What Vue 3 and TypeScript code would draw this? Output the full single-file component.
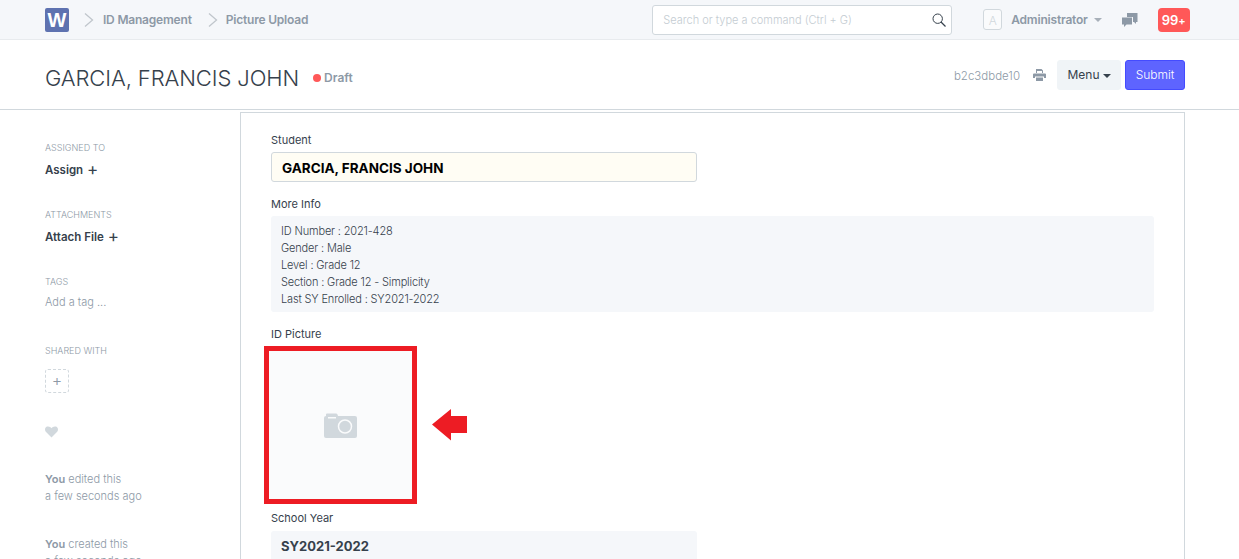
<script setup lang="ts">
const info: string[] = [
  'ID Number : 2021-428',
  'Gender : Male',
  'Level : Grade 12',
  'Section : Grade 12 - Simplicity',
  'Last SY Enrolled : SY2021-2022',
]
</script>

<template>
  <div class="page">
    <header class="nav">
      <div class="logo">W</div>
      <svg class="chev first" width="10" height="14" viewBox="0 0 10 14"><path d="M1 .5 8.500 7 1 13.500" fill="none" stroke="#c0c6cc" stroke-width="1.300" /></svg>
      <span class="crumb">ID Management</span>
      <svg class="chev second" width="10" height="14" viewBox="0 0 10 14"><path d="M1 .5 8.500 7 1 13.500" fill="none" stroke="#c0c6cc" stroke-width="1.300" /></svg>
      <span class="crumb">Picture Upload</span>
      <div class="search">
        <span class="placeholder">Search or type a command (Ctrl + G)</span>
        <svg width="14" height="14" viewBox="0 0 14 14"><circle cx="5.700" cy="5.700" r="4.700" fill="none" stroke="#36414c" stroke-width="1" /><path d="M9 9l4.500 4.500" stroke="#36414c" stroke-width="1.300" /></svg>
      </div>
      <div class="avatar">A</div>
      <span class="user">Administrator</span>
      <span class="caret nav-caret"></span>
      <svg class="chat" width="16" height="14" viewBox="0 0 16 14">
        <path d="M5 0h10.500v9H14v2l-2-2h-1V4H5z" fill="#8d99a6" />
        <path d="M0 4.500h10v7H4.500L2 14v-2.500H0z" fill="#8d99a6" />
      </svg>
      <div class="badge">99<small>+</small></div>
    </header>

    <section class="titlebar">
      <h1>GARCIA, FRANCIS JOHN</h1>
      <span class="dot"></span>
      <span class="status">Draft</span>
      <span class="docid">b2c3dbde10</span>
      <svg class="printer" width="13" height="12" viewBox="0 0 13 12">
        <path d="M3 0h5.500L10 1.500V4H9V2H4v2H3z M1 4.500h11q1 0 1 1V9h-2V7.500H2V9H0V5.500q0-1 1-1z M3 8.500h7V12H3z" fill="#8d99a6" />
      </svg>
      <button class="btn menu">Menu<span class="caret menu-caret"></span></button>
      <button class="btn submit">Submit</button>
    </section>

    <main class="body">
      <aside class="side">
        <div class="side-label first-label">ASSIGNED TO</div>
        <div class="side-action">Assign <span class="plus">+</span></div>
        <div class="side-label attach-label">ATTACHMENTS</div>
        <div class="side-action">Attach File <span class="plus">+</span></div>
        <div class="side-label tags-label">TAGS</div>
        <div class="add-tag">Add a tag ...</div>
        <div class="side-label shared-label">SHARED WITH</div>
        <div class="share-box">+</div>
        <svg class="heart" width="13" height="12" viewBox="0 0 13 12"><path d="M6.500 11.500.8 5.800C-.6 4.200-.1 1.200 2 .6c1.800-.5 3.500.2 4.500 1.700C7.500.8 9.200.1 11 .6c2.100.6 2.600 3.600 1.200 5.200z" fill="#d1d8dd" /></svg>
        <div class="activity"><b>You</b> edited this<br />a few seconds ago</div>
        <div class="activity created"><b>You</b> created this<br />a few seconds ago</div>
      </aside>

      <section class="card">
        <div class="field-label student-label">Student</div>
        <div class="student">GARCIA, FRANCIS JOHN</div>
        <div class="field-label more-label">More Info</div>
        <div class="more">
          <div v-for="line in info" :key="line">{{ line }}</div>
        </div>
        <div class="field-label picture-label">ID Picture</div>
        <div class="picture-row">
          <div class="picture">
            <svg width="33" height="25" viewBox="0 0 33 25">
              <path d="M2 3V1.500Q2 .5 3 .500h9q1 0 1.500 1L14 3h17q2 0 2 2v18q0 2-2 2H2q-2 0-2-2V5q0-2 2-2z" fill="#d1d8dd" />
              <rect x="4" y="4" width="8" height="1.500" fill="#fafbfc" />
              <circle cx="21" cy="13.500" r="6.500" fill="none" stroke="#fafbfc" stroke-width="1.500" />
            </svg>
          </div>
          <svg class="arrow" width="36" height="32" viewBox="0 0 36 32"><path d="M0 15.500 19 0v7h16v17H19v7.500z" fill="#ed1c24" /></svg>
        </div>
        <div class="field-label year-label">School Year</div>
        <div class="year">SY2021-2022</div>
      </section>
    </main>
  </div>
</template>

<style>
html, body { margin: 0; overflow: hidden; background: #fff; }
</style>

<style scoped>
.page { width: 1239px; height: 559px; overflow: hidden; font-family: Inter, "Noto Sans", sans-serif; color: #36414c; background: #fff; }
.nav { height: 39px; background: #f5f7fa; border-bottom: 1px solid #e8ebee; display: flex; align-items: center; padding-left: 45px; box-sizing: content-box; }
.logo { width: 24px; height: 24px; border-radius: 2px; background: #5e72b0; color: #fff; font: 700 20px/24px "Liberation Sans", sans-serif; text-align: center; flex: none; }
.chev { flex: none; }
.chev.first { margin: 0 9px 0 15px; }
.chev.second { margin: 0 8px 0 16px; }
.crumb { font-size: 12px; font-weight: 600; color: #8d99a6; white-space: nowrap; letter-spacing: -0.2px; }
.search { margin-left: 344px; width: 300px; height: 30px; border: 1px solid #d1d8dd; border-radius: 3px; background: #fff; display: flex; align-items: center; justify-content: space-between; padding: 0 5px 0 10px; box-sizing: border-box; flex: none; }
.placeholder { font-size: 11px; font-weight: 300; color: #c4ccd2; white-space: nowrap; }
.avatar { margin-left: 31px; width: 19px; height: 21px; border: 1px solid #d1d8dd; border-radius: 3px; background: #fafbfc; color: #d1d8dd; font-size: 12px; font-weight: 300; line-height: 21px; text-align: center; flex: none; box-sizing: border-box; }
.user { margin-left: 9px; font-size: 12px; font-weight: 600; color: #8d99a6; white-space: nowrap; letter-spacing: -0.2px; }
.caret { display: inline-block; width: 0; height: 0; border-left: 4px solid transparent; border-right: 4px solid transparent; border-top: 4px solid currentColor; }
.nav-caret { color: #a8b0b9; margin-left: 6px; }
.chat { margin-left: 20px; flex: none; }
.badge { margin-left: 20px; width: 32px; height: 24px; background: #ff5858; border-radius: 4px; color: #fff; font-size: 13px; font-weight: 600; line-height: 24px; text-align: center; flex: none; }
.badge small { font-size: 11px; }

.titlebar { height: 69px; border-bottom: 1px solid #d1d8dd; display: flex; align-items: center; padding-left: 45px; }
h1 { margin: 6px 0 0; font-size: 22px; font-weight: 300; line-height: 30px; letter-spacing: -0.1px; color: #36414c; white-space: nowrap; }
.dot { width: 8px; height: 8px; border-radius: 50%; background: #ff5858; margin: 6px 3px 0 14px; flex: none; }
.status { margin-top: 6px; font-size: 12px; font-weight: 600; color: #8d99a6; }
.docid { margin: 2px 0 0 auto; font-size: 11.500px; font-weight: 300; color: #8d99a6; }
.printer { margin: 0 0 0 13px; flex: none; }
.btn { font-family: inherit; font-size: 12px; height: 30px; border-radius: 3px; padding: 0; box-sizing: border-box; cursor: pointer; }
.menu { margin-left: 11px; width: 64px; background: #f0f4f7; border: 1px solid #f0f4f7; color: #36414c; }
.menu-caret { margin-left: 3px; vertical-align: 1px; }
.submit { margin: 0 54px 0 4px; width: 60px; background: #5e64ff; border: 1px solid #444bff; color: #fff; font-weight: 300; }

.body { display: flex; padding-left: 45px; }
.side { width: 195px; flex: none; }
.side-label { font-size: 9px; font-weight: 300; line-height: 12px; color: #8d99a6; white-space: nowrap; }
.first-label { margin-top: 32px; }
.attach-label { margin-top: 31px; }
.tags-label { margin-top: 31px; }
.shared-label { margin-top: 35px; }
.side-action { margin-top: 8px; font-size: 11.500px; font-weight: 600; line-height: 16px; color: #36414c; white-space: nowrap; }
.plus { font-size: 17px; font-weight: 400; margin-left: 1px; line-height: 14px; vertical-align: -1px; }
.add-tag { margin-top: 6px; font-size: 11px; font-weight: 300; line-height: 16px; color: #8d99a6; }
.share-box { margin-top: 12px; width: 24px; height: 24px; border: 1px dashed #d1d8dd; border-radius: 3px; box-sizing: border-box; color: #8d99a6; font-size: 16px; font-weight: 300; line-height: 21px; text-align: center; }
.heart { display: block; margin-top: 33px; }
.activity { margin-top: 33px; font-size: 11px; font-weight: 300; line-height: 17px; color: #8d99a6; white-space: nowrap; }
.activity b { font-weight: 600; }
.activity.created { margin-top: 31px; }

.card { width: 945px; flex: none; margin-top: 2px; border: 1px solid #d1d8dd; border-bottom: none; box-sizing: border-box; padding-left: 30px; height: 500px; }
.field-label { font-size: 11px; line-height: 14px; color: #36414c; white-space: nowrap; }
.student-label { margin-top: 20px; }
.student { margin-top: 5px; width: 426px; height: 30px; box-sizing: border-box; border: 1px solid #d1d8dd; border-radius: 3px; background: #fffdf4; padding-left: 10px; font-size: 13.500px; font-weight: 700; line-height: 30px; color: #000; }
.more-label { margin-top: 15px; }
.more { margin-top: 5px; width: 883px; height: 96px; background: #f5f7fa; border-radius: 3px; padding: 7px 10px; box-sizing: border-box; font-size: 11px; font-weight: 300; line-height: 17px; letter-spacing: -0.15px; color: #36414c; }
.picture-label { margin-top: 15px; }
.picture-row { margin: 5px 0 0 -7px; display: flex; align-items: center; }
.picture { width: 153px; height: 158px; box-sizing: border-box; border: 5px solid #ed1c24; background: #fafbfc; display: flex; align-items: center; justify-content: center; flex: none; }
.arrow { margin: -1px 0 0 15px; flex: none; }
.year-label { margin-top: 7px; }
.year { margin-top: 6px; width: 426px; height: 40px; border-radius: 3px; background: #f5f7fa; padding-left: 10px; box-sizing: border-box; font-size: 13px; font-weight: 700; line-height: 31px; color: #36414c; }
</style>
